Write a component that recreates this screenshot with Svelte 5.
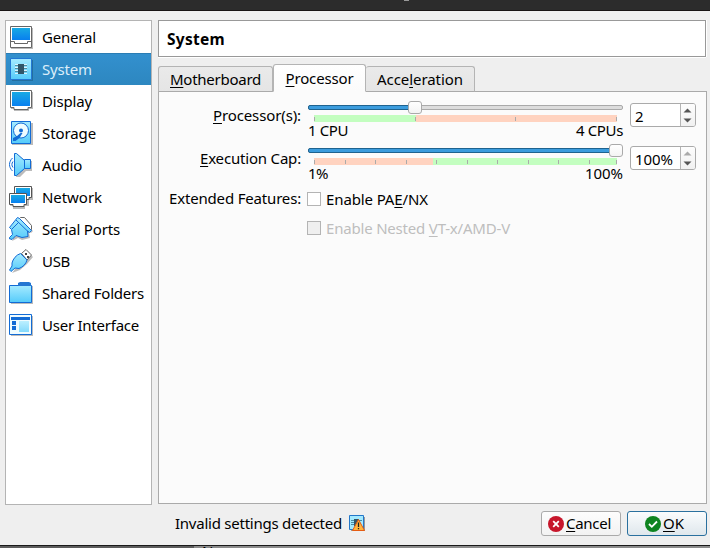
<script>
  const items = [
    ['general', 'General', 54], ['system', 'System', 50], ['display', 'Display', 50],
    ['storage', 'Storage', 54], ['audio', 'Audio', 40], ['network', 'Network', 60],
    ['serial', 'Serial Ports', 78], ['usb', 'USB', 28], ['folder', 'Shared Folders', 102],
    ['ui', 'User Interface', 97]
  ];
  const tabs = [
    { pre: '', key: 'M', post: 'otherboard', w: 91, box: 115 },
    { pre: '', key: 'P', post: 'rocessor', w: 68, box: 93, active: true },
    { pre: 'Acce', key: 'l', post: 'eration', w: 86, box: 109 }
  ];
  const sliders = [
    { key: 'P', post: 'rocessor(s):', w: 88, from: '1 CPU', fw: 40, to: '4 CPUs', tw: 47, value: '2', vw: 8, handle: 101,
      split: 102, first: '#c3fec0', second: '#ffd3c0', ticks: [0, 101, 201, 302] },
    { key: 'E', post: 'xecution Cap:', w: 101, from: '1%', fw: 20, to: '100%', tw: 38, value: '100%', vw: 38, handle: 302, max: true,
      split: 119, first: '#ffd3c0', second: '#c3fec0', ticks: [0, 31, 61, 92, 122, 153, 183, 214, 244, 275, 302] }
  ];

  // Spreads the letters so that a label fills its intended width.
  function fit(node, width) {
    const natural = node.getBoundingClientRect().width;
    node.style.letterSpacing = `${(width - natural) / node.textContent.length}px`;
  }
</script>

{#snippet label(pre, key, post, w)}
  <span class="label" use:fit={w}>{pre}<span class="key">{key}</span>{post}</span>
{/snippet}

{#snippet icon(name)}
  <svg class="icon" width="24" height="26" viewBox="0 0 24 26">
    {#if name === 'general'}
      <path d="M2 3h22v21H2z" fill="#bbb" />
      <path d="M1.5 1.5h21v21h-21z" fill="#fff" stroke="#666" />
      <path d="M3 3h18v12H3z" fill="url(#screen)" />
      <path d="M2 16.500h3.500v2h13v-2H22" fill="none" stroke="#666" />
    {:else if name === 'system'}
      <path d="M3 3h21v21H3z" fill="#246f9f" />
      <path d="M1.500 1.500h21v21h-21z" fill="url(#pale)" stroke="#2377d3" />
      <path d="M6 7.500h12M6 10.500h12M6 13.500h12M6 16.500h12" stroke="#d9f5ff" />
      <path d="M6 8.500h12M6 11.500h12M6 14.500h12" stroke="#568b9f" />
      <path d="M9 7h6v10H9z" fill="#315568" />
    {:else if name === 'display'}
      <path d="M2 3h22v17h-4v2H5v-2H2z" fill="#bbb" />
      <path d="M1.500 1.500h21v17H19v2H5v-2H1.500z" fill="#fff" stroke="#666" />
      <path d="M3 3h18v14H3z" fill="url(#screen)" />
    {:else if name === 'storage'}
      <path d="M3 2h21v22H3z" fill="#bbb" />
      <path d="M2.500.5h19v22h-19z" fill="url(#pale)" stroke="#126bd5" />
      <circle cx="12" cy="9.500" r="7.500" fill="#eefcff" stroke="#126bd5" />
      <circle cx="12" cy="9.500" r="2" fill="#126bd5" />
      <path d="m13.500 12-3 5-4 3H4v-3l4-2 3.500-3z" fill="#126bd5" />
    {:else if name === 'audio'}
      <path d="M10 3 17 8h6v10h-6l-6 6H7z" fill="#bbb" />
      <path d="M5.500.5h2l8 7v8l-8 7h-2z" fill="url(#pale)" stroke="#126bd5" />
      <path d="M15.500 6.500h6v9h-6z" fill="url(#pale)" stroke="#126bd5" />
      <path d="M3.500 5C-.5 9-.5 14 3.500 18M4 8.500c-1.500 2-1.500 4 0 6" fill="none" stroke="#126bd5" />
    {:else if name === 'network'}
      <path d="M7 3h17v12h-4v6h-4v3H4v-3H1z" fill="#bbb" />
      <path d="M5.500 1.500h17v11H20v2H9v-2H5.500z" fill="#fff" stroke="#555" />
      <path d="M7 3h14v8H7z" fill="url(#screen)" />
      <path d="M.5 8.500h17v11H15v2H4v-2H.5z" fill="#fff" stroke="#555" />
      <path d="M2 10h14v8H2z" fill="url(#screen)" />
    {:else if name === 'serial'}
      <path d="m12 2 12 12-2 2-2-1 1 6-8 2-4-2-6 3z" fill="#bbb" />
      <path d="m9.500 2.500 2-2h4l7 8v4l-3 2z" fill="#fff" stroke="#666" />
      <path d="m.5 20.500 3-3-1-5L.5 10.500 8.500.5l2 1 12 12-2 2-2-1.500.5 5.500-6 1-3-1-3-1-4 4-3-1z" fill="url(#pale)" stroke="#126bd5" />
      <path d="m7 3 12.500 12M3 12 9.500 5.500" fill="none" stroke="#126bd5" />
    {:else if name === 'usb'}
      <path d="m19 3 5 5-6 7-7 6-8 3z" fill="#bbb" />
      <path d="m12.500 4.500 4.500-4 5.500 5.500-4.500 5z" fill="#fff" stroke="#666" />
      <path d="M16 4h2v2h-2zM18 7h2v2h-2z" fill="#444" />
      <path d="m11.500 4.500 6.500 6.500c-1 4-4 7-8 8.500l-4-.5-4 3.500-1.500-1.500 2.500-4v-3c1-4 4-8 8.500-9.500z" fill="url(#pale)" stroke="#126bd5" />
    {:else if name === 'folder'}
      <path d="M2 5h22v18H2z" fill="#bbb" />
      <path d="M9 4V2l2-1h9l2 1v3H9z" fill="#2476d2" />
      <path d="M.5 4.500h22v17H.5z" fill="url(#pale)" stroke="#126bd5" />
      <path d="M9 2h13v3H9z" fill="#2476d2" />
    {:else}
      <path d="M2 3h22v20H2z" fill="#bbb" />
      <path d="M.5 1.500h22v20H.5z" fill="#effcff" stroke="#126bd5" />
      <path d="M2 4h19v3H2zM3 8h4v4H3zM3 13h4v4H3z" fill="#126bd5" />
      <path d="M10 8h10v11H10z" fill="url(#pale)" opacity=".7" />
    {/if}
  </svg>
{/snippet}

<svg class="defs" width="0" height="0">
  <defs>
    <linearGradient id="screen" x2="0" y2="1"><stop stop-color="#18aae4" /><stop offset="1" stop-color="#087fef" /></linearGradient>
    <linearGradient id="pale" x2="0" y2="1"><stop stop-color="#a5eaff" /><stop offset="1" stop-color="#55cbfa" /></linearGradient>
  </defs>
</svg>

<div class="window">
  <header class="titlebar"><i></i></header>
  <main>
    <nav>
      {#each items as [name, text, w]}
        <div class="item" class:selected={name === 'system'}>
          {@render icon(name)}
          <span class="label" use:fit={w}>{text}</span>
        </div>
      {/each}
    </nav>
    <section>
      <h1><span class="label" use:fit={58}>System</span></h1>
      <div class="tabs">
        {#each tabs as t}
          <div class="tab" class:active={t.active} style:width="{t.box}px">{@render label(t.pre, t.key, t.post, t.w)}</div>
        {/each}
      </div>
      <div class="panel">
        {#each sliders as s}
          <div class="row">
            <div class="name">{@render label('', s.key, s.post, s.w)}</div>
            <div class="slider">
              <div class="track">
                <div class="fill" style:width="{s.handle + 5}px"></div>
                <div class="handle" style:left="{s.handle}px"></div>
              </div>
              <div class="scale" style:background="linear-gradient(90deg, {s.first} {s.split}px, {s.second} {s.split}px)">
                {#each s.ticks as x}<i style:left="{x}px"></i>{/each}
              </div>
              <div class="ends">
                <span class="label" use:fit={s.fw}>{s.from}</span>
                <span class="label" use:fit={s.tw}>{s.to}</span>
              </div>
            </div>
            <div class="spin">
              <div class="value"><span class="label" use:fit={s.vw}>{s.value}</span></div>
              <svg width="14" height="22" viewBox="0 0 14 22">
                <path d="M2.500 8.500 6.500 4.500l4 4z" fill={s.max ? '#aaa' : '#555'} />
                <path d="M2.500 14.500h8l-4 4z" fill="#555" />
              </svg>
            </div>
          </div>
        {/each}
        <div class="check first">
          <div class="name"><span class="label" use:fit={132}>Extended Features:</span></div>
          <span class="box"></span>{@render label('Enable PA', 'E', '/NX', 102)}
        </div>
        <div class="check off">
          <div class="name"></div>
          <span class="box"></span>{@render label('Enable Nested ', 'V', 'T-x/AMD-V', 184)}
        </div>
      </div>
    </section>
  </main>
  <footer>
    <span class="label" use:fit={167}>Invalid settings detected</span>
    <svg class="warn" width="17" height="17" viewBox="0 0 17 17">
      <path d="M2 2h14v14H2z" fill="#999" />
      <path d="M.5.5h14v14H.5z" fill="#a4eaff" stroke="#2377c9" />
      <path d="M2 5.500h3M2 7.500h3M2 9.500h3M10 5.500h3" stroke="#4c8ca4" />
      <path d="M5 4h5v7H5z" fill="#315568" />
      <path d="m9.500 4.500 6 11h-12z" fill="#ffb53e" stroke="#e65c12" stroke-linejoin="round" />
      <path d="M9.500 7.500v4.500M9.500 13v1.200" stroke="#222" stroke-width="1.300" />
    </svg>
    <div class="button">
      <svg width="16" height="16" viewBox="0 0 16 16"><circle cx="8" cy="8" r="8" fill="#c7162b" /><path d="m5.200 5.200 5.600 5.600m0-5.600-5.600 5.600" stroke="#fff" stroke-width="1.800" /></svg>
      {@render label('', 'C', 'ancel', 45)}
    </div>
    <div class="button ok">
      <svg width="16" height="16" viewBox="0 0 16 16"><circle cx="8" cy="8" r="8" fill="#0e8420" /><path d="m4 8 2.800 2.800L12 5.500" fill="none" stroke="#fff" stroke-width="1.800" /></svg>
      {@render label('', 'O', 'K', 21)}
    </div>
  </footer>
  <div class="behind"><span>None</span></div>
</div>

<style>
  .window { width: 710px; height: 548px; overflow: hidden; display: flex; flex-direction: column; background: #efefef; color: #000; font: 15px/20px "Noto Sans", "Open Sans", sans-serif; }
  .window :global(*) { box-sizing: border-box; }
  .defs { position: absolute; }
  .label { white-space: pre; flex: none; }
  .key { text-decoration: underline; text-decoration-thickness: 1px; text-underline-offset: 2px; text-decoration-skip-ink: none; }
  .titlebar { height: 11px; flex: none; background: #2c2c2c; border-bottom: 1px solid #191515; }
  .titlebar i { display: block; width: 5px; height: 1px; margin-left: 404px; background: #999; }
  main { display: flex; gap: 6px; padding: 9px 3px 0 5px; height: 494px; flex: none; }
  nav { width: 147px; height: 485px; border: 1px solid #b4b4b4; background: #fff; flex: none; }
  .item { height: 32px; display: flex; align-items: center; padding-left: 3px; gap: 9px; }
  .icon { flex: none; margin-top: 2px; }
  .selected { background: linear-gradient(#2a7db4 1px, #3390ce 1px, #2d87c0); color: #dceefa; }
  section { width: 549px; display: flex; flex-direction: column; }
  h1 { margin: 0; width: 548px; height: 37px; border: 1px solid #999; box-shadow: 0 1px #fff, 1px 0 #fff; background: #fff; font-size: 15.5px; line-height: 36px; padding-left: 8px; flex: none; }
  .tabs { height: 28px; margin-top: 7px; display: flex; align-items: flex-end; flex: none; position: relative; }
  .tab { height: 26px; border: 1px solid #b4b4b4; border-left-width: 0; border-radius: 3px 3px 0 0; background: linear-gradient(#eaeaea, #e5e5e5); display: flex; justify-content: center; align-items: center; border-bottom-color: #aaa; }
  .tab:first-child { border-left-width: 1px; }
  .tab.active { height: 28px; border-left-width: 1px; background: linear-gradient(#fff, #fbfbfb); border-bottom-color: #fbfbfb; }
  .panel { height: 413px; margin-top: -1px; border: 1px solid #aaa; background: #fbfbfb; padding-top: 10px; flex: none; }
  .row { height: 43px; display: flex; }
  .name { width: 142px; margin-right: 7px; text-align: right; flex: none; line-height: 27px; }
  .slider { width: 315px; padding-top: 3px; flex: none; }
  .track { height: 5px; position: relative; border: 1px solid #aaa; background: #ddd; border-radius: 2px; }
  .fill { height: 5px; margin: -1px; border: 1px solid #1f638f; border-radius: 2px; background: #3b9cdd; }
  .handle { position: absolute; top: -5px; width: 14px; height: 13px; border: 1px solid #aaa; border-radius: 3px; background: linear-gradient(#fff, #f4f4f4); margin-left: -2px; }
  .scale { position: relative; width: 303px; height: 7px; margin: 5px 0 0 6px; }
  .scale i { position: absolute; top: 2px; width: 1px; height: 4px; background: #aaa; }
  .ends { display: flex; justify-content: space-between; line-height: 17px; }
  .spin { width: 66px; height: 24px; margin: 1px 0 0 7px; border: 1px solid #aaa; border-radius: 3px; background: #fff; display: flex; flex: none; overflow: hidden; }
  .value { width: 51px; border-right: 1px solid #b4b4b4; padding-left: 4px; line-height: 24px; }
  .spin svg { background: linear-gradient(#fdfdfd, #f1f1f1); flex: none; }
  .check { height: 29px; display: flex; align-items: center; }
  .check.first { margin-top: -4px; }
  .check .name { margin-right: 6px; }
  .box { width: 14px; height: 14px; border: 1px solid #b4b4b4; background: #fff; margin-right: 5px; flex: none; }
  .off { color: #bebebe; }
  .off .box { background: #efefef; }
  footer { height: 40px; padding: 6px 3px 0 175px; display: flex; align-items: flex-start; line-height: 25px; flex: none; }
  .warn { margin: 4px 0 0 7px; }
  .button { width: 80px; height: 25px; margin-left: auto; border: 1px solid #aaa; border-radius: 3px; background: linear-gradient(#fdfdfd, #f2f2f2); display: flex; align-items: center; justify-content: center; gap: 2px; padding-right: 3px; }
  .button.ok { margin-left: 6px; border-color: #2a709e; background: linear-gradient(#fafcfd, #dfe7ec); padding-right: 5px; }
  .behind { height: 3px; flex: none; overflow: hidden; border-top: 1px solid #191919; background: linear-gradient(90deg, #5c5c5c 194px, #8b8b8b 194px); padding-left: 202px; line-height: 14px; }
  .behind span { display: block; margin-top: -2px; }
</style>
